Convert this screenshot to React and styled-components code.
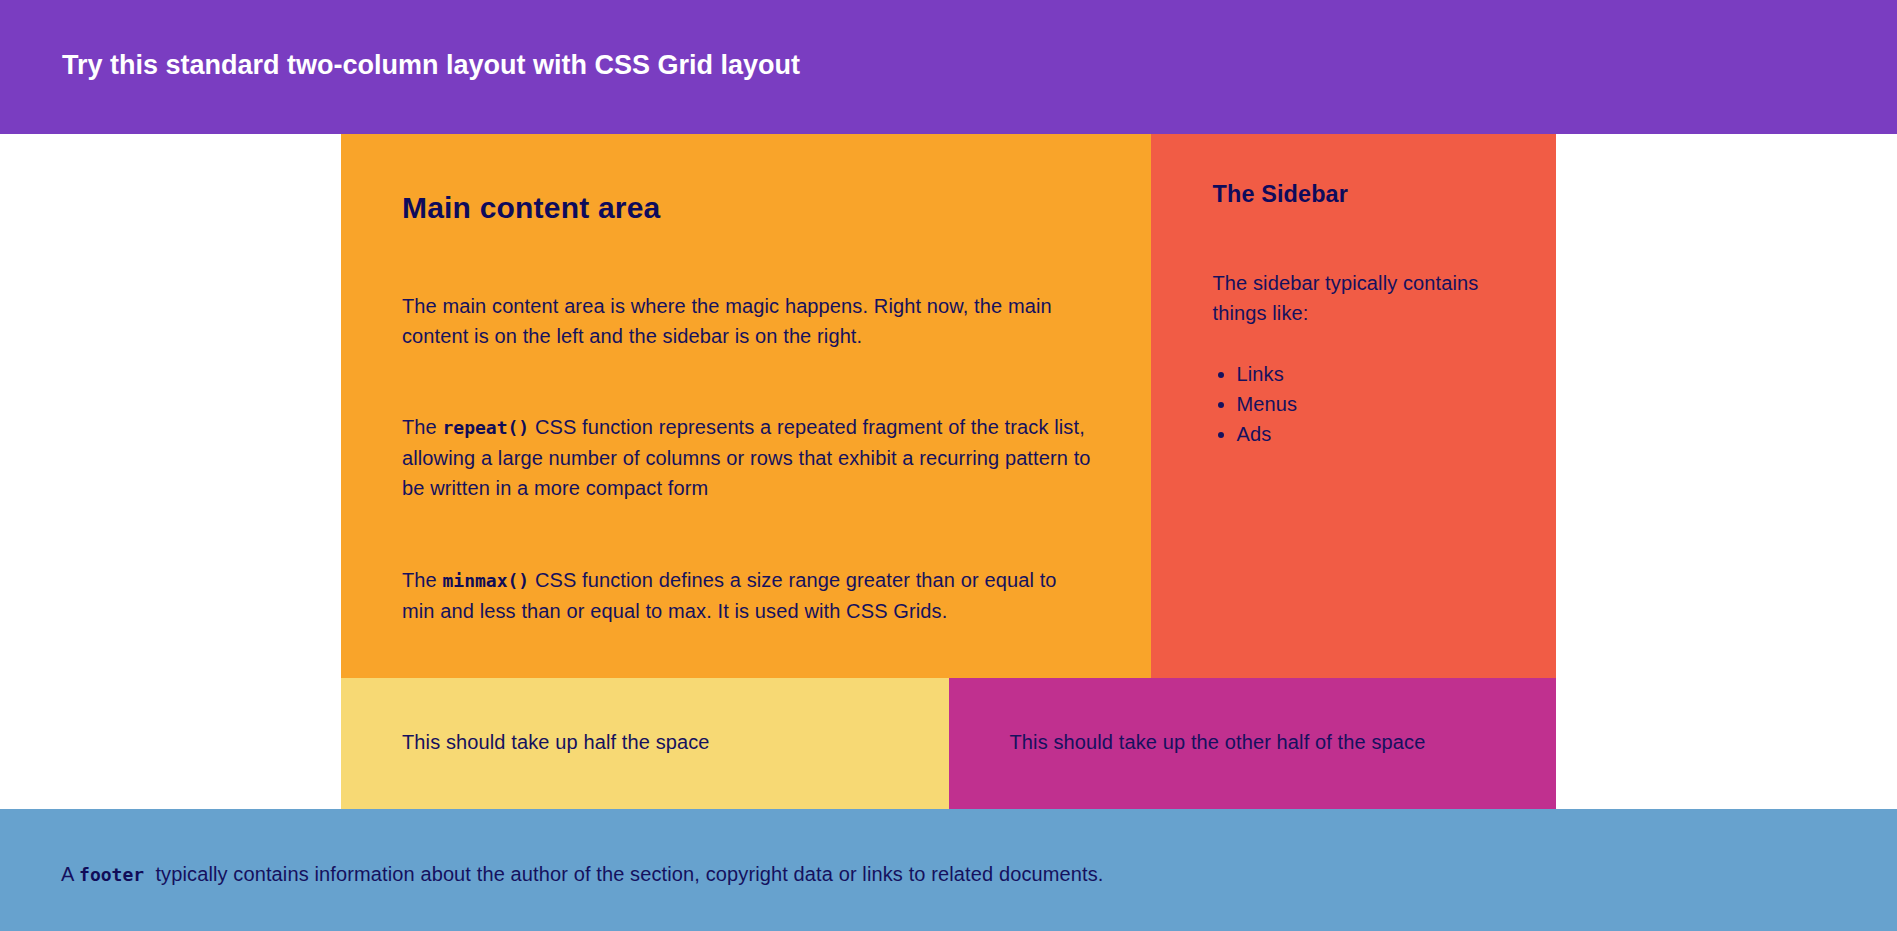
import React from "react";
import styled, { createGlobalStyle } from "styled-components";

const GlobalStyle = createGlobalStyle`
  html, body {
    margin: 0;
    padding: 0;
    background: #ffffff;
  }
  body {
    font-family: "Liberation Sans", Arial, sans-serif;
    font-size: 20px;
    line-height: 1.5;
    color: #15115e;
  }
  * { box-sizing: border-box; }
`;

const Page = styled.div`
  display: flex;
  flex-direction: column;
`;

const Header = styled.header`
  background: #7a3dc1;
  padding: 45px 62px 48.5px;
`;

const Title = styled.h1`
  margin: 0;
  font-size: 27px;
  line-height: 40.5px;
  font-weight: 700;
  color: #ffffff;
`;

const Layout = styled.div`
  width: 1215px;
  margin: 0 auto;
  display: grid;
  grid-template-columns: repeat(6, 1fr);
`;

const Main = styled.main`
  grid-column: span 4;
  background: #f9a42a;
  padding: 51px 58px 52px 61px;
  display: flex;
  flex-direction: column;
`;

const Sidebar = styled.aside`
  grid-column: span 2;
  background: #f15c45;
  padding: 43px 50px 40px 61.5px;
  display: flex;
  flex-direction: column;
`;

const MainHeading = styled.h2`
  margin: 0 0 61px;
  font-size: 30px;
  line-height: 45px;
  font-weight: 700;
  letter-spacing: 0.2px;
  color: #0e0b5c;
`;

const SideHeading = styled.h3`
  margin: 0 0 56px;
  font-size: 23.4px;
  line-height: 35px;
  font-weight: 700;
  letter-spacing: 0.15px;
  color: #0e0b5c;
`;

const Para = styled.p`
  margin: 0 0 ${(p) => p.$gap ?? 0}px;
  line-height: 30px;
  letter-spacing: 0.12px;
`;

const Code = styled.code`
  font-family: "DejaVu Sans Mono", "Liberation Mono", monospace;
  font-weight: 700;
  font-size: 18px;
  letter-spacing: 0;
  color: #100c58;
`;

const List = styled.ul`
  margin: 0;
  padding-left: 24px;
  list-style: disc;
`;

const Item = styled.li`
  line-height: 30px;
  letter-spacing: 0.12px;
`;

const Half = styled.section`
  grid-column: span 3;
  background: ${(p) => p.$bg};
  padding: 49px 61px 51.7px;
`;

const Footer = styled.footer`
  background: #67a2ce;
  padding: 50.7px 61px 50px;
`;

export default function App() {
  return (
    <>
      <GlobalStyle />
      <Page>
        <Header>
          <Title>Try this standard two-column layout with CSS Grid layout</Title>
        </Header>
        <Layout>
          <Main>
            <MainHeading>Main content area</MainHeading>
            <Para $gap={61}>
              The main content area is where the magic happens. Right now, the main
              content is on the left and the sidebar is on the right.
            </Para>
            <Para $gap={62}>
              The <Code>repeat()</Code> CSS function represents a repeated fragment of the
              track list, allowing a large number of columns or rows that exhibit a
              recurring pattern to be written in a more compact form
            </Para>
            <Para>
              The <Code>minmax()</Code> CSS function defines a size range greater than or
              equal to min and less than or equal to max. It is used with CSS Grids.
            </Para>
          </Main>
          <Sidebar>
            <SideHeading>The Sidebar</SideHeading>
            <Para $gap={31}>The sidebar typically contains things like:</Para>
            <List>
              <Item>Links</Item>
              <Item>Menus</Item>
              <Item>Ads</Item>
            </List>
          </Sidebar>
          <Half $bg="#f7d974">
            <Para>This should take up half the space</Para>
          </Half>
          <Half $bg="#c0308f">
            <Para>This should take up the other half of the space</Para>
          </Half>
        </Layout>
        <Footer>
          <Para>
            A <Code>footer</Code>{"\u00a0"} typically contains information about the author of
            the section, copyright data or links to related documents.
          </Para>
        </Footer>
      </Page>
    </>
  );
}
